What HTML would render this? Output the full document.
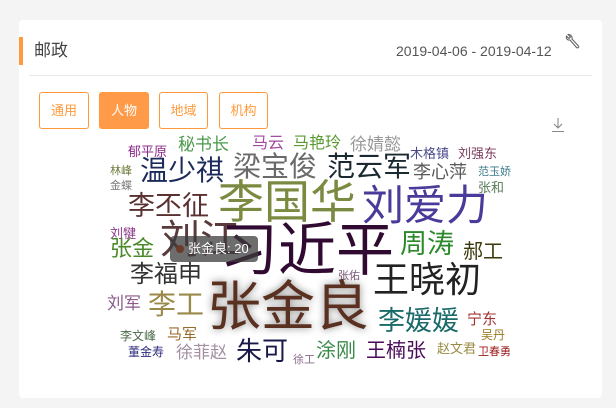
<!DOCTYPE html>
<html><head><meta charset="utf-8"><style>
body{margin:0;width:616px;height:408px;background:#f4f4f4;font-family:"Liberation Sans","Noto Sans CJK SC",sans-serif;position:relative;overflow:hidden}
.card{position:absolute;left:19px;top:20px;width:583px;height:378px;background:#fff;border-radius:4px}
.bar{position:absolute;left:19px;top:37px;width:4px;height:28px;background:#ff9a3c}
.title{position:absolute;left:34px;top:37px;font-size:17px;color:#444;line-height:28px}
.date{position:absolute;left:396px;top:37px;font-size:14px;color:#555;line-height:28px}
.hr{position:absolute;left:29px;top:75px;width:563px;height:1px;background:#e8e8e8}
.btn{position:absolute;top:92px;width:48px;border:1px solid #ff9a3c;border-radius:3px;color:#ff9a3c;font-size:13px;line-height:35px;text-align:center;box-sizing:border-box;height:37px}
.w{position:absolute;line-height:1;white-space:nowrap}
.tip{position:absolute;left:170px;top:236px;width:88px;height:26px;background:rgba(60,60,60,.75);border-radius:4px;color:#fff;font-size:13px;line-height:26px;box-sizing:border-box;padding-left:18px}
.tip:before{content:"";position:absolute;left:6px;top:9px;width:8px;height:8px;border-radius:50%;background:#6a3a2a}
</style></head><body>
<div class="card"></div>
<div class="bar"></div>
<div class="title">邮政</div>
<div class="date">2019-04-06 - 2019-04-12</div>
<svg style="position:absolute;left:565px;top:33px" width="17" height="17" viewBox="0 0 17 17" fill="none" stroke="#666" stroke-width="1.1" stroke-linejoin="round"><path d="M3 1.5 L5.5 4 L4 5.5 L1.5 3 C0.8 5.5 2.5 7.5 5 7 L11.5 14.5 C12.5 15.5 14.5 14 13.5 13 L7 6 C7.5 3.5 5.5 1 3 1.5 Z"/></svg>
<div class="hr"></div>
<div class="btn" style="left:39px;width:50px">通用</div>
<div class="btn" style="left:99px;width:50px;background:#ff9a48;color:#fff">人物</div>
<div class="btn" style="left:159px;width:49px">地域</div>
<div class="btn" style="left:219px;width:49px">机构</div>
<svg style="position:absolute;left:550px;top:117px" width="16" height="16" viewBox="0 0 16 16" fill="none" stroke="#888" stroke-width="1.1"><path d="M8 1 V11 M4 7 L8 11 L12 7 M2 14.5 H14"/></svg>

<div class="w" style="left:128px;top:145px;font-size:13px;color:#8b2a8b">郁平原</div>
<div class="w" style="left:178px;top:136px;font-size:17px;color:#4a9a4a">秘书长</div>
<div class="w" style="left:252px;top:136px;font-size:16px;color:#a04aa0">马云</div>
<div class="w" style="left:293px;top:136px;font-size:16px;color:#5a9a30">马艳玲</div>
<div class="w" style="left:350px;top:136px;font-size:17px;color:#999">徐婧懿</div>
<div class="w" style="left:410px;top:147px;font-size:13px;color:#4a4a8a">木格镇</div>
<div class="w" style="left:458px;top:147px;font-size:13px;color:#7a3a5a">刘强东</div>
<div class="w" style="left:110px;top:166px;font-size:11px;color:#6a7a3a">林峰</div>
<div class="w" style="left:110px;top:181px;font-size:11px;color:#7a7a7a">金蝶</div>
<div class="w" style="left:140px;top:157px;font-size:28px;color:#1a2a5a">温少祺</div>
<div class="w" style="left:233px;top:153px;font-size:28px;color:#6a6a6a">梁宝俊</div>
<div class="w" style="left:327px;top:153px;font-size:28px;color:#1a2a30">范云军</div>
<div class="w" style="left:413px;top:163px;font-size:18px;color:#5a5a5a">李心萍</div>
<div class="w" style="left:478px;top:167px;font-size:11px;color:#3a7a8a">范玉娇</div>
<div class="w" style="left:478px;top:181px;font-size:13px;color:#5a7a5a">张和</div>
<div class="w" style="left:128px;top:193px;font-size:27px;color:#5a3030">李丕征</div>
<div class="w" style="left:218px;top:179px;font-size:46px;color:#7a8a40">李国华</div>
<div class="w" style="left:362px;top:185px;font-size:42px;color:#4a3a9a">刘爱力</div>
<div class="w" style="left:110px;top:227px;font-size:13px;color:#8a3a8a">刘犍</div>
<div class="w" style="left:110px;top:238px;font-size:22px;color:#4a8a2a">张金</div>
<div class="w" style="left:160px;top:220px;font-size:40px;color:#5a3a3a">刘江</div>
<div class="w" style="left:220px;top:222px;font-size:58px;color:#300a30">习近平</div>
<div class="w" style="left:400px;top:231px;font-size:27px;color:#2a8a2a">周涛</div>
<div class="w" style="left:463px;top:242px;font-size:20px;color:#3a3a0a">郝工</div>
<div class="w" style="left:130px;top:263px;font-size:24px;color:#333">李福申</div>
<div class="w" style="left:338px;top:271px;font-size:11px;color:#7a5a7a">张佑</div>
<div class="w" style="left:373px;top:262px;font-size:36px;color:#222">王晓初</div>
<div class="w" style="left:107px;top:295px;font-size:17px;color:#8a5a8a">刘军</div>
<div class="w" style="left:148px;top:291px;font-size:28px;color:#9a8a4a">李工</div>
<div class="w" style="left:207px;top:280px;font-size:54px;color:#5a3020;text-shadow:0 0 8px rgba(0,0,0,.5)">张金良</div>
<div class="w" style="left:378px;top:308px;font-size:27px;color:#1a6a6a">李媛媛</div>
<div class="w" style="left:467px;top:312px;font-size:15px;color:#a03030">宁东</div>
<div class="w" style="left:120px;top:330px;font-size:12px;color:#4a6a4a">李文峰</div>
<div class="w" style="left:167px;top:327px;font-size:15px;color:#9a6a2a">马军</div>
<div class="w" style="left:481px;top:329px;font-size:12px;color:#9a7a20">吴丹</div>
<div class="w" style="left:128px;top:346px;font-size:12px;color:#2a2a7a">董金寿</div>
<div class="w" style="left:176px;top:344px;font-size:17px;color:#a090a0">徐菲赵</div>
<div class="w" style="left:236px;top:338px;font-size:26px;color:#1a1a4a">朱可</div>
<div class="w" style="left:293px;top:355px;font-size:11px;color:#8a6a8a">徐工</div>
<div class="w" style="left:316px;top:341px;font-size:20px;color:#3a8a4a">涂刚</div>
<div class="w" style="left:366px;top:341px;font-size:20px;color:#4a0a5a">王楠张</div>
<div class="w" style="left:437px;top:342px;font-size:13px;color:#9a8a40">赵文君</div>
<div class="w" style="left:478px;top:347px;font-size:11px;color:#a01a1a">卫春勇</div>
<div class="tip">张金良: 20</div>
</body></html>
